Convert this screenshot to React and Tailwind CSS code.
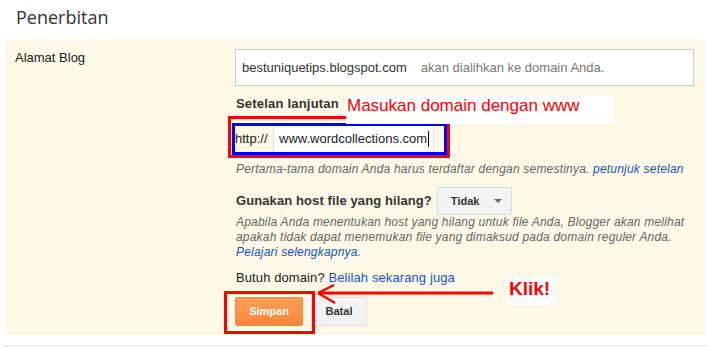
import React from 'react';

const App = () => {
    return (
        <div className="w-[708px] h-[347px] bg-white overflow-hidden text-[13px] text-[#222]" style={{ fontFamily: '"Liberation Sans", Arial, sans-serif' }}>
            <div className="h-[39px] pl-[16px] pt-[5px]">
                <h1 className="text-[18px] leading-[24px] text-[#333]" style={{ fontFamily: '"Open Sans", sans-serif' }}>Penerbitan</h1>
            </div>

            <div className="ml-[5px] mr-[3px] bg-[#fef8e6] flex pb-[9px]">
                <div className="w-[230px] pl-[10px] pt-[11px] leading-[16px] text-[#222]">Alamat Blog</div>

                <div className="relative flex-1 pt-[10px]">
                    {/* blog address */}
                    <div className="w-[459px] h-[37px] border border-[#ccc] bg-white flex items-center pl-[6px] leading-[16px]">
                        <span className="text-[#333]">bestuniquetips.blogspot.com</span>
                        <span className="ml-[14px] text-[#777]">akan dialihkan ke domain Anda.</span>
                    </div>

                    {/* advanced settings */}
                    <div className="relative mt-[10px] h-[20px]">
                        <div className="font-bold leading-[16px] text-[#333] pl-[1px] tracking-[0.2px]">Setelan lanjutan</div>
                        <div className="absolute left-[111px] top-0 w-[267px] h-[28px] bg-white z-10 pl-[1px]">
                            <span className="text-[17px] leading-[20px] text-[#ff0000]">Masukan domain dengan www</span>
                        </div>
                    </div>

                    <div className="relative ml-[-7px] w-[222px] h-[42px] border-[3px] border-[#ff0000]">
                        <div className="absolute left-[1px] top-[4px] w-[215px] h-[32px] border-[3px] border-[#0000ff] flex">
                            <div className="w-[38px] flex items-center leading-[16px] text-[#222]">http://</div>
                            <div className="w-[161px] bg-white border-x border-[#e0e0e0] flex items-center pl-[5px] leading-[16px] text-[#222]">
                                www.wordcollections.com<span className="inline-block w-px h-[16px] bg-black ml-[1px]"></span>
                            </div>
                        </div>
                    </div>

                    <div className="mt-[3px] pl-[1px] text-[12px] leading-[16px] italic text-[#666] tracking-[0.2px] whitespace-nowrap">
                        Pertama-tama domain Anda harus terdaftar dengan semestinya. <span className="text-[#15c]">petunjuk setelan</span>
                    </div>

                    {/* missing host */}
                    <div className="mt-[10px] flex items-center pl-[1px]">
                        <span className="font-bold leading-[16px] text-[#333] tracking-[0.1px]">Gunakan host file yang hilang?</span>
                        <button className="ml-[5px] w-[75px] h-[28px] rounded-[2px] border border-[#dcdcdc] bg-gradient-to-b from-[#f5f5f5] to-[#f1f1f1] flex items-center pl-[13px] text-[11px] font-bold text-[#333]">
                            Tidak
                            <span className="ml-[15px] w-0 h-0 border-x-[4px] border-x-transparent border-t-[4px] border-t-[#666]"></span>
                        </button>
                    </div>

                    <div className="pl-[1px] text-[12px] leading-[15px] italic text-[#666] tracking-[0.2px]">
                        <div className="whitespace-nowrap">Apabila Anda menentukan host yang hilang untuk file Anda, Blogger akan melihat</div>
                        <div className="whitespace-nowrap">apakah tidak dapat menemukan file yang dimaksud pada domain reguler Anda.</div>
                        <div><span className="text-[#15c]">Pelajari selengkapnya</span>.</div>
                    </div>

                    <div className="mt-[10px] pl-[1px] leading-[16px] text-[#222] tracking-[0.1px]">
                        Butuh domain? <span className="text-[#15c]">Belilah sekarang juga</span>
                    </div>

                    {/* buttons */}
                    <div className="relative mt-[11px] flex gap-[8px]">
                        <button className="w-[68px] h-[29px] rounded-[2px] border border-[#f8883b] bg-gradient-to-b from-[#fd9d56] to-[#f6883c] text-white text-[11px] font-bold">Simpan</button>
                        <button className="w-[56px] h-[29px] rounded-[2px] border border-[#dcdcdc] bg-gradient-to-b from-[#f5f5f5] to-[#f1f1f1] text-[#333] text-[11px] font-bold">Batal</button>
                        <div className="absolute left-[-11px] top-[-6px] w-[91px] h-[43px] border-[3px] border-[#ff0000]"></div>
                    </div>

                    {/* arrow annotation */}
                    <svg className="absolute left-[80px] top-[244px]" width="180" height="22" viewBox="0 0 180 22">
                        <line x1="3" y1="10" x2="178" y2="10" stroke="#ff0000" strokeWidth="3" />
                        <line x1="3" y1="10" x2="19" y2="2" stroke="#ff0000" strokeWidth="2.5" />
                        <line x1="3" y1="10" x2="20" y2="20" stroke="#ff0000" strokeWidth="2.5" />
                    </svg>
                    <div className="absolute left-[272px] top-[238px] w-[48px] h-[28px] bg-white pl-[2px]">
                        <span className="text-[19px] leading-[24px] font-bold text-[#ff0000]">Klik!</span>
                    </div>
                </div>
            </div>

            <div className="ml-[5px] mt-[10px] h-px bg-[#e5e5e5]"></div>
        </div>
    );
};

export default App;
